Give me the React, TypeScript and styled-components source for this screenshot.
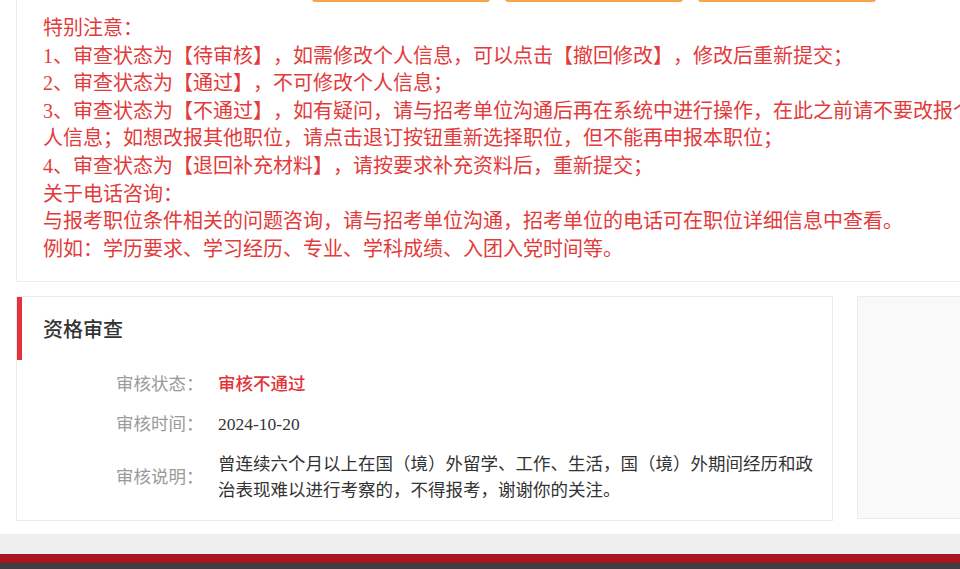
import styled, { createGlobalStyle } from "styled-components";

const GlobalStyle = createGlobalStyle`
  body {
    margin: 0;
    overflow: hidden;
    background-color: #fff;
    font-family: "Liberation Serif", "Noto Sans CJK SC", serif;
    text-spacing-trim: space-all;
  }
`;

const Page = styled.div`
  display: flex;
  flex-direction: column;
  height: 569px;
  overflow: hidden;
`;

const Main = styled.div`
  padding-left: 16px;
  width: 979px;
`;

const NoticePanel = styled.section`
  box-sizing: border-box;
  border: 1px solid #ececec;
  border-top: none;
  padding: 0 26px 18px;
`;

const ActionRow = styled.div`
  display: flex;
  gap: 15px;
  margin-top: -38px;
  padding-left: 269px;
`;

const ActionButton = styled.span`
  display: block;
  width: 178px;
  height: 40px;
  border-radius: 3px;
  background-color: #f7a549;
`;

const NoticeText = styled.div`
  margin-top: 13px;
  width: 940px;
  color: #e23b3b;
  font-size: 20px;
  line-height: 27.6px;
`;

const ContentRow = styled.div`
  display: flex;
  gap: 24px;
  margin-top: 14px;
`;

const ReviewCard = styled.section`
  box-sizing: border-box;
  width: 817px;
  border: 1px solid #ebebeb;
  padding-bottom: 17px;
`;

const CardHeader = styled.div`
  display: flex;
  align-items: center;
  height: 63px;
  border-left: 5px solid #e2343a;
  padding-left: 21px;
`;

const CardTitle = styled.h3`
  margin: 0;
  font-family: "Noto Sans CJK SC", sans-serif;
  font-size: 20px;
  font-weight: 500;
  color: #333;
`;

const InfoList = styled.div`
  display: flex;
  flex-direction: column;
  gap: 14px;
  margin-top: 11px;
  padding-left: 99px;
`;

const InfoRow = styled.div`
  display: flex;
  align-items: center;
  font-size: 17.5px;
  line-height: 26px;
`;

const InfoLabel = styled.span`
  flex: 0 0 102px;
  color: #9a9a9a;
`;

const InfoValue = styled.span<{ $alert?: boolean }>`
  width: 605px;
  color: ${(props) => (props.$alert ? "#e2343a" : "#333")};
  font-weight: ${(props) => (props.$alert ? 500 : 400)};
`;

const SideCard = styled.aside`
  flex: 1;
  height: 221px;
  border: 1px solid #ebebeb;
  background-color: #f9f9f9;
`;

const Footer = styled.footer`
  margin-top: 13px;
`;

const FooterBand = styled.div<{ $color: string; $height: number }>`
  height: ${(props) => props.$height}px;
  background-color: ${(props) => props.$color};
`;

const noticeLines = [
  "特别注意：",
  "1、审查状态为【待审核】，如需修改个人信息，可以点击【撤回修改】，修改后重新提交；",
  "2、审查状态为【通过】，不可修改个人信息；",
  "3、审查状态为【不通过】，如有疑问，请与招考单位沟通后再在系统中进行操作，在此之前请不要改报个人信息；如想改报其他职位，请点击退订按钮重新选择职位，但不能再申报本职位；",
  "4、审查状态为【退回补充材料】，请按要求补充资料后，重新提交；",
  "关于电话咨询：",
  "与报考职位条件相关的问题咨询，请与招考单位沟通，招考单位的电话可在职位详细信息中查看。",
  "例如：学历要求、学习经历、专业、学科成绩、入团入党时间等。",
];

function App() {
  return (
    <>
      <GlobalStyle />
      <Page>
        <Main>
          <NoticePanel>
            <ActionRow>
              <ActionButton />
              <ActionButton />
              <ActionButton />
            </ActionRow>
            <NoticeText>
              {noticeLines.map((line) => (
                <div key={line}>{line}</div>
              ))}
            </NoticeText>
          </NoticePanel>
          <ContentRow>
            <ReviewCard>
              <CardHeader>
                <CardTitle>资格审查</CardTitle>
              </CardHeader>
              <InfoList>
                <InfoRow>
                  <InfoLabel>审核状态：</InfoLabel>
                  <InfoValue $alert>审核不通过</InfoValue>
                </InfoRow>
                <InfoRow>
                  <InfoLabel>审核时间：</InfoLabel>
                  <InfoValue>2024-10-20</InfoValue>
                </InfoRow>
                <InfoRow>
                  <InfoLabel>审核说明：</InfoLabel>
                  <InfoValue>
                    曾连续六个月以上在国（境）外留学、工作、生活，国（境）外期间经历和政治表现难以进行考察的，不得报考，谢谢你的关注。
                  </InfoValue>
                </InfoRow>
              </InfoList>
            </ReviewCard>
            <SideCard />
          </ContentRow>
        </Main>
        <Footer>
          <FooterBand $color="#efefef" $height={20} />
          <FooterBand $color="#a9151d" $height={9} />
          <FooterBand $color="#3c3e41" $height={7} />
        </Footer>
      </Page>
    </>
  );
}

export default App;
